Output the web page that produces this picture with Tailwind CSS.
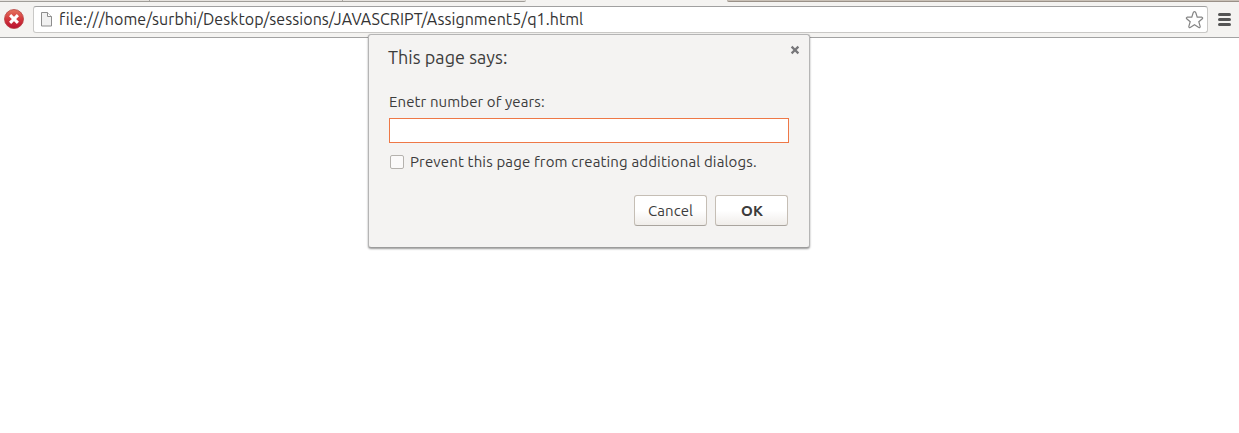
<!DOCTYPE html>
<html lang="en">
<head>
<meta charset="utf-8">
<title>q1.html</title>
<script src="https://cdn.jsdelivr.net/npm/@tailwindcss/browser@4"></script>
</head>
<body class="h-[433px] overflow-hidden bg-white font-['Ubuntu','Noto_Sans',sans-serif] text-[#3c3c3c]">
<header class="flex h-[38px] flex-col border-b border-[#a2a2a2] bg-[#f4f3f1]">
  <!-- Tab strip edge -->
  <div class="flex h-[2px] shrink-0">
    <div class="flex w-[526px] rounded-br-[2px] border-b border-[#a09d98] bg-[#e6e3df]">
      <div class="w-[150px] border-r border-[#a9a6a1]"></div>
      <div class="w-[193px] border-r border-[#a9a6a1]"></div>
    </div>
    <div class="w-[201px]"></div>
    <div class="flex-1 rounded-bl-[2px] border-b border-[#9a9188] bg-[#cac2b8]"></div>
  </div>
  <div class="flex h-[35px] items-center pl-1 pr-[8px]">
    <svg class="-mt-px size-5 shrink-0" viewBox="0 0 20 20">
      <defs><linearGradient id="stop" x1="0" y1="0" x2="0" y2="1"><stop offset="0" stop-color="#e5755f"/><stop offset=".5" stop-color="#d3383c"/><stop offset="1" stop-color="#b80f31"/></linearGradient></defs>
      <circle cx="10" cy="10" r="9.5" fill="url(#stop)" stroke="#b5403f" stroke-width=".8"/>
      <path d="M6.1 6.1l7.8 7.8M13.9 6.1l-7.8 7.8" stroke="#fff" stroke-width="3"/>
    </svg>
    <div class="ml-[9px] flex h-[27px] w-[1175px] items-center rounded-[3px] border border-[#c9c8c6] border-t-[#a0a0a0] bg-white pl-[6px] pr-[2px]">
      <svg class="-mt-px h-4 w-[13px] shrink-0" viewBox="0 0 13 16">
        <path d="M1.5 1.5h6l4 4v9.5h-10z" fill="#f1f1f1" stroke="#8d8d8d"/>
        <path d="M7.5 1.5v4h4" fill="#fff" stroke="#8d8d8d"/>
      </svg>
      <span class="-mt-[2px] ml-[6px] flex-1 whitespace-nowrap text-[16px] leading-[22px] tracking-[0.07px] text-[#333]">file:///home/surbhi/Desktop/sessions/JAVASCRIPT/Assignment5/q1.html</span>
      <svg class="h-[20px] w-[20px] shrink-0" viewBox="0.5 0 20 20">
        <path d="M10 1.7Q11 1.7 11.4 3L12.7 7.2H17.4Q18.7 7.7 17.8 8.8L14.3 11.7L15.7 16.6Q15.7 18 14.3 17.5L10 14.7L5.7 17.5Q4.3 18 4.3 16.6L5.7 11.7L2.2 8.8Q1.3 7.7 2.6 7.2H7.3L8.6 3Q9 1.7 10 1.7Z" fill="#fff" stroke="#858585" stroke-width="1.2"/>
      </svg>
    </div>
    <svg class="ml-[10px] h-[13px] w-[13px] shrink-0" viewBox="0 0 13 13">
      <path d="M1.5 1.5h10M1.5 6.5h10M1.5 11.5h10" stroke="#555" stroke-width="3" stroke-linecap="round"/>
    </svg>
  </div>
</header>

<section role="dialog" class="absolute left-[368px] top-[34px] h-[214px] w-[442px] rounded-[3px] border border-[#b5b5b5] border-b-[#9c9c9c] bg-[#f4f3f2] pl-5 pr-5 pt-[10px] shadow-[0_1px_2px_rgba(0,0,0,0.4)]">
  <div class="-ml-px flex h-6 items-center justify-between">
    <h1 class="whitespace-nowrap text-[18px] leading-6 tracking-[0.04px]">This page says:</h1>
    <svg class="-mr-[11px] -mt-[15px] size-[10px]" viewBox="0 0 10 10"><path d="M1.6 1.6l6.8 6.8M8.4 1.6l-6.8 6.8" stroke="#77777a" stroke-width="2.2"/></svg>
  </div>
  <label class="mt-[23px] block h-[20px] whitespace-nowrap text-[15px] leading-5 tracking-[0.1px]">Enetr number of years:</label>
  <div class="mt-[6px] h-[25px] w-[400px] border border-[#ee7847] bg-white"></div>
  <div class="mt-[9px] flex h-5 items-center pl-px">
    <span class="size-[14px] rounded-[2px] border border-[#b5b2ae] bg-[#fbfafa]"></span>
    <span class="ml-[6px] whitespace-nowrap text-[15px] leading-5 tracking-[0.15px]">Prevent this page from creating additional dialogs.</span>
  </div>
  <div class="mt-[23px] flex justify-end gap-2 pr-px">
    <button class="h-[31px] w-[73px] rounded-[3px] border border-[#c5beb5] border-b-[#a9a49e] bg-linear-to-b from-white from-50% to-[#f0edea] text-[15px] leading-5 tracking-[0.1px]">Cancel</button>
    <button class="h-[31px] w-[73px] rounded-[3px] border border-[#c5beb5] border-b-[#a9a49e] bg-linear-to-b from-white from-50% to-[#f0edea] pl-px text-[15px] font-bold leading-5">OK</button>
  </div>
</section>
</body>
</html>
